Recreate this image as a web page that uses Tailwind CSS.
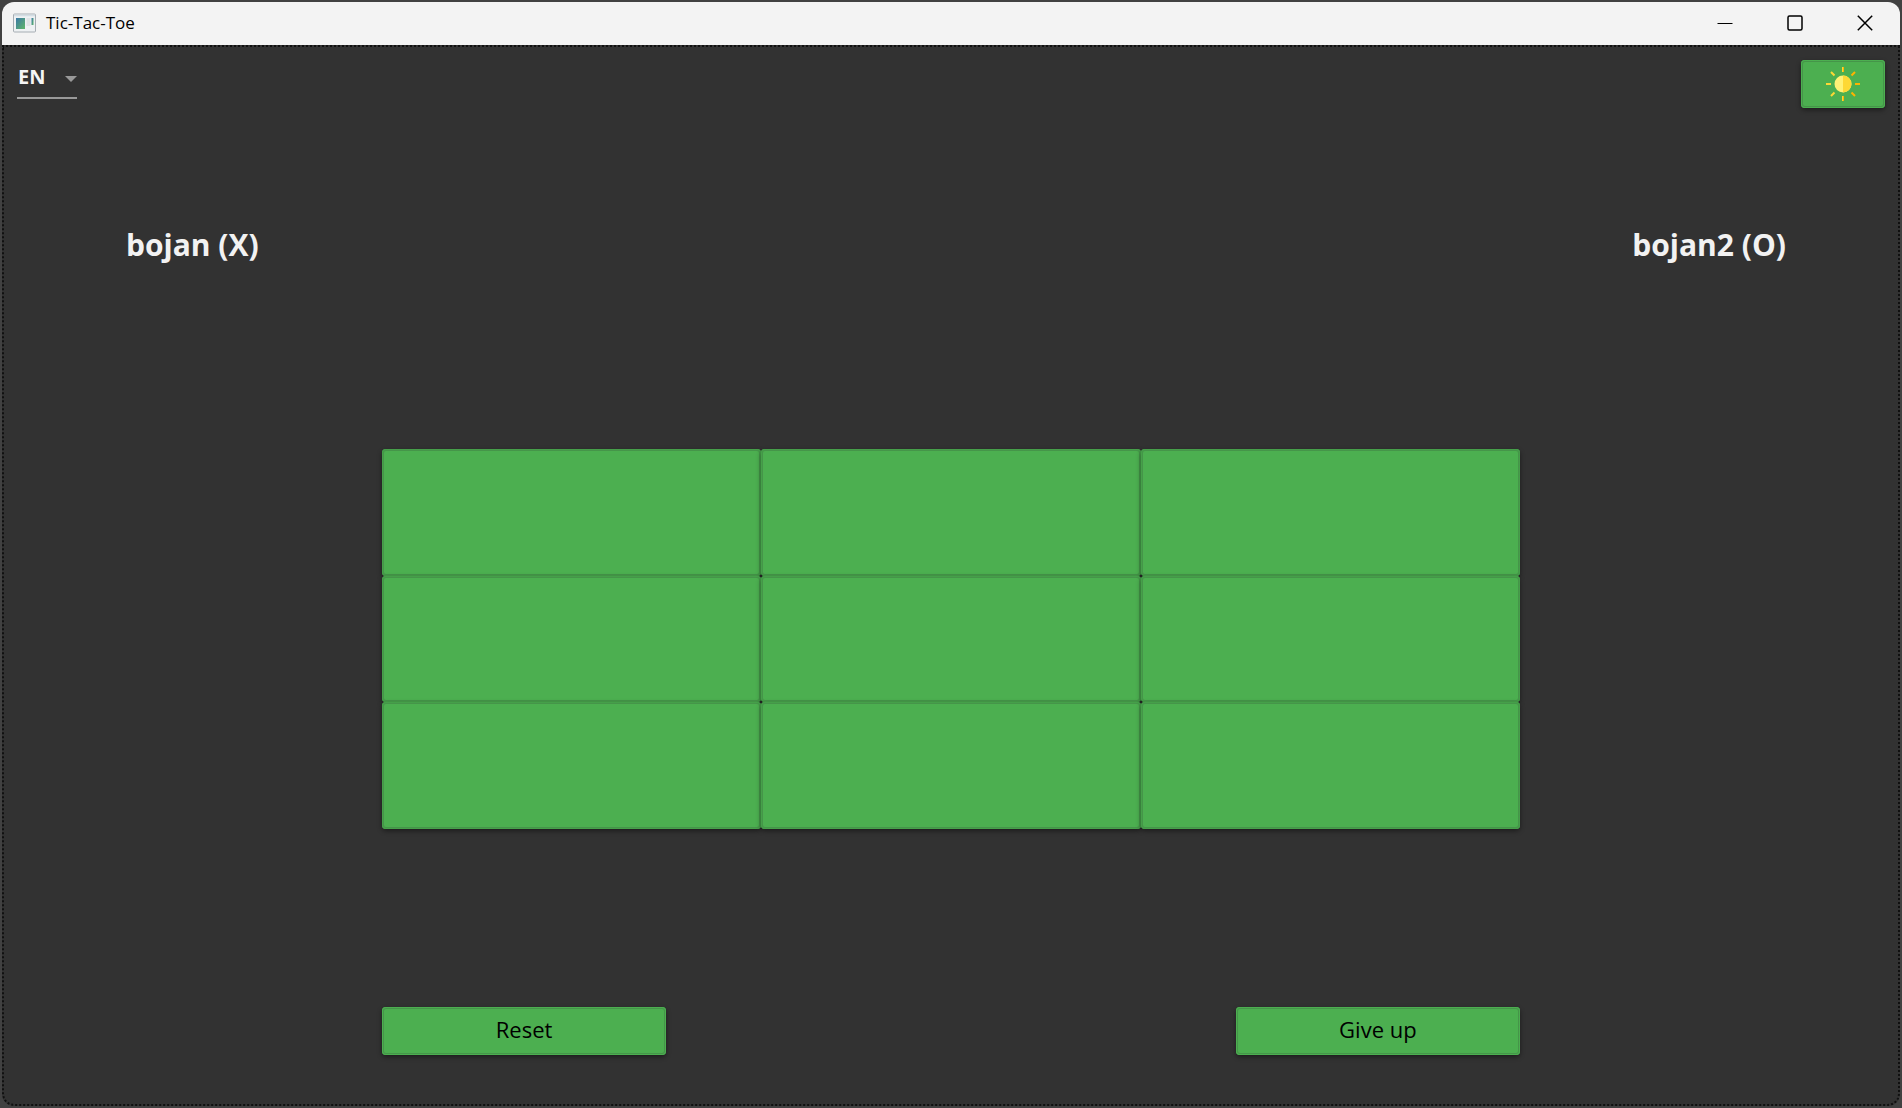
<!DOCTYPE html>
<html lang="en">
<head>
<meta charset="utf-8">
<title>Tic-Tac-Toe</title>
<script src="https://cdn.jsdelivr.net/npm/@tailwindcss/browser@4"></script>
</head>
<body class="flex min-h-screen flex-col bg-[#414141] p-[2px] font-['Open_Sans','Noto_Sans',sans-serif]">
<div class="flex flex-1 flex-col overflow-hidden rounded-xl bg-[#323232]">
  <header class="flex h-[43px] items-center bg-[#f3f3f3] pb-[2px] pl-[11px] text-black">
    <svg class="h-5 w-6" viewBox="0 0 24 20" aria-hidden="true">
      <defs><linearGradient id="pane" x1="0" y1="0" x2="1" y2="1"><stop offset="0" stop-color="#3b78a6"/><stop offset="1" stop-color="#5fb768"/></linearGradient></defs>
      <rect x=".5" y="1" width="22" height="18" rx="1" fill="#eef1f3" stroke="#a6adb3"/>
      <path d="M1 2.500h21" stroke="#d3dde4" stroke-width="1.500"/>
      <rect x="3" y="5" width="9" height="11" fill="url(#pane)"/>
      <rect x="13.500" y="5" width="4" height="8" fill="#dfe3e5"/>
      <rect x="18.500" y="5" width="2" height="7" fill="url(#pane)"/>
    </svg>
    <h1 class="ml-[9px] flex-1 text-[17px] leading-6">Tic-Tac-Toe</h1>
    <button class="flex h-full w-[70px] items-center justify-center" aria-label="Minimize"><svg class="h-4 w-4" viewBox="0 0 16 16" stroke="currentColor"><path d="M.5 8.500h15"/></svg></button>
    <button class="flex h-full w-[70px] items-center justify-center" aria-label="Maximize"><svg class="h-4 w-4" viewBox="0 0 16 16" fill="none" stroke="currentColor" stroke-width="1.500"><rect x="1" y="1" width="14" height="14" rx="1.500"/></svg></button>
    <button class="flex h-full w-[70px] items-center justify-center" aria-label="Close"><svg class="h-4 w-4" viewBox="0 0 16 16" stroke="currentColor" stroke-width="1.500"><path d="M.8 .8l14.400 14.400M15.200 .8L.8 15.200"/></svg></button>
  </header>

  <main class="flex flex-1 flex-col rounded-b-xl border-2 border-dotted border-[#101010] pb-[49px]">
    <div class="flex items-start justify-between px-[13px] pt-[13px]">
      <div class="relative">
        <select aria-label="Language" class="block h-[39px] w-[60px] appearance-none border-b-2 border-[#999] bg-transparent pb-[3px] pl-px text-xl font-bold text-[#f5f5f5]">
          <option class="text-black">EN</option>
        </select>
        <svg class="pointer-events-none absolute top-4 right-0 h-[6px] w-3" viewBox="0 0 12 6" fill="#999"><path d="M0 0h12L6 6z"/></svg>
      </div>
      <button class="flex h-12 w-[84px] items-center justify-center rounded bg-[#4caf50] shadow-[inset_0_0_0_1px_#4caf50,inset_0_0_0_2px_#459549,0_2px_5px_rgba(0,0,0,.45)]" aria-label="Light theme">
        <svg class="h-[34px] w-[34px]" viewBox="0 0 34 34" stroke-width="2">
          <path d="M17 0v5M17 29v5M0 17h5M5 5l3.500 3.500M5 29l3.500-3.500" stroke="#fdd835"/>
          <path d="M29 17h5M29 5l-3.500 3.500M29 29l-3.500-3.500" stroke="#ffb300" stroke-width="2"/>
          <path d="M17.500 0v5M17.500 29v5" stroke="#ffb300" stroke-width="1"/>
          <circle cx="17" cy="17" r="8.500" fill="#fff176" stroke="none"/>
          <path d="M17 8.500a8.500 8.500 0 0 1 0 17z" fill="#fdd835" stroke="none"/>
        </svg>
      </button>
    </div>

    <div class="mt-[117px] flex justify-between pr-[112px] pl-[122px] text-3xl leading-10 font-bold text-[#f2f2f2]">
      <h2>bojan (X)</h2>
      <h2>bojan2 (O)</h2>
    </div>

    <div class="mx-auto mt-[184px] grid w-[calc(60%+2px)] flex-1 grid-cols-3 grid-rows-3">
      <button class="rounded bg-[#4caf50] shadow-[inset_0_0_0_1px_#469f4a,inset_0_0_0_2px_#459549,0_2px_5px_rgba(0,0,0,.45)]" aria-label="Row 1, column 1"></button>
      <button class="rounded bg-[#4caf50] shadow-[inset_0_0_0_1px_#469f4a,inset_0_0_0_2px_#459549,0_2px_5px_rgba(0,0,0,.45)]" aria-label="Row 1, column 2"></button>
      <button class="rounded bg-[#4caf50] shadow-[inset_0_0_0_1px_#469f4a,inset_0_0_0_2px_#459549,0_2px_5px_rgba(0,0,0,.45)]" aria-label="Row 1, column 3"></button>
      <button class="rounded bg-[#4caf50] shadow-[inset_0_0_0_1px_#469f4a,inset_0_0_0_2px_#459549,0_2px_5px_rgba(0,0,0,.45)]" aria-label="Row 2, column 1"></button>
      <button class="rounded bg-[#4caf50] shadow-[inset_0_0_0_1px_#469f4a,inset_0_0_0_2px_#459549,0_2px_5px_rgba(0,0,0,.45)]" aria-label="Row 2, column 2"></button>
      <button class="rounded bg-[#4caf50] shadow-[inset_0_0_0_1px_#469f4a,inset_0_0_0_2px_#459549,0_2px_5px_rgba(0,0,0,.45)]" aria-label="Row 2, column 3"></button>
      <button class="rounded bg-[#4caf50] shadow-[inset_0_0_0_1px_#469f4a,inset_0_0_0_2px_#459549,0_2px_5px_rgba(0,0,0,.45)]" aria-label="Row 3, column 1"></button>
      <button class="rounded bg-[#4caf50] shadow-[inset_0_0_0_1px_#469f4a,inset_0_0_0_2px_#459549,0_2px_5px_rgba(0,0,0,.45)]" aria-label="Row 3, column 2"></button>
      <button class="rounded bg-[#4caf50] shadow-[inset_0_0_0_1px_#469f4a,inset_0_0_0_2px_#459549,0_2px_5px_rgba(0,0,0,.45)]" aria-label="Row 3, column 3"></button>
    </div>

    <div class="mx-auto mt-[178px] flex w-[calc(60%+2px)] justify-between text-[22px] font-medium text-black">
      <button class="h-12 w-1/4 rounded bg-[#4caf50] pb-1 shadow-[inset_0_0_0_1px_#4caf50,inset_0_0_0_2px_#459549,0_2px_5px_rgba(0,0,0,.45)]">Reset</button>
      <button class="h-12 w-1/4 rounded bg-[#4caf50] pb-1 shadow-[inset_0_0_0_1px_#4caf50,inset_0_0_0_2px_#459549,0_2px_5px_rgba(0,0,0,.45)]">Give up</button>
    </div>
  </main>
</div>
</body>
</html>
